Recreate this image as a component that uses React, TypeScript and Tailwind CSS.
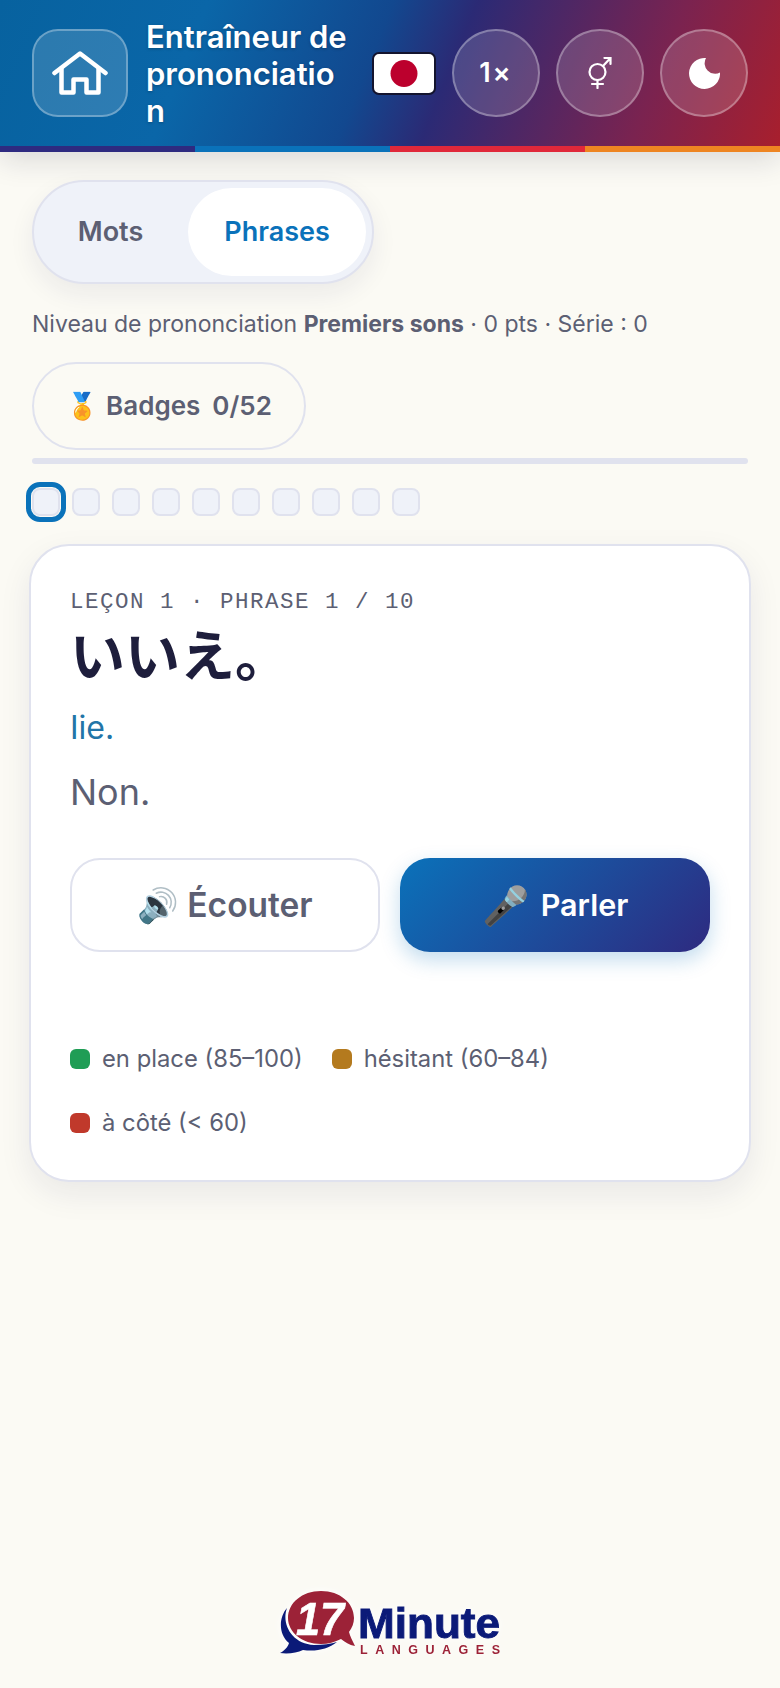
import React from 'react';

const Legend = ({ color, label }: { color: string; label: string }) => (
  <div className="flex items-center gap-[12px]">
    <span className={`h-5 w-5 rounded-[6px] ${color}`} />
    <span className="text-[23.800px] leading-[38px] text-[#5c5f73]">{label}</span>
  </div>
);

const HomeIcon = () => (
  <svg width="56" height="44" viewBox="0 0 56 44" fill="none" stroke="white" strokeWidth="4.5" strokeLinecap="round" strokeLinejoin="round">
    <path d="M2.500 22 28 2.500 53.500 22" />
    <path d="M9.500 18v23.500h12V28.500h13v13h12V18" />
  </svg>
);

const GenderIcon = () => (
  <svg width="24" height="32" viewBox="0 0 24 32" fill="none" stroke="white" strokeWidth="2.200" strokeLinecap="round">
    <circle cx="9.500" cy="15" r="8" />
    <path d="M9.500 23v8M4 27h11M15 9l7.500-8M16.500 1h6v6" />
  </svg>
);

const MoonIcon = () => (
  <svg width="32" height="32" viewBox="0 0 32 32">
    <path fill="white" d="M18 1A15.500 15.500 0 1 0 32 15.500A10.500 10.500 0 0 1 18 1z" />
  </svg>
);

const Logo = () => (
  <svg width="224" height="72" viewBox="0 0 224 72" className="[filter:drop-shadow(0_0_4px_white)]">
    <path fill="#0b1a78" d="M9 18C3 34 14 54 36 55c9 0 17-1 23-3-9 7-21 10-34 8-6 3-15 4-23 3 4-2 8-6 9-10C0 44 1 27 9 18z" />
    <path fill="#9c2237" d="M43 1c19 0 33 12 33 27 0 5-2 10-5 14 1 4 3 8 6 14-6-1-10-4-14-7-6 3-13 5-20 5-19 0-33-12-33-26C10 13 24 1 43 1z" />
    <text x="18" y="45" fill="white" stroke="white" strokeWidth="0.6" fontFamily="'Liberation Sans', sans-serif" fontSize="46" fontWeight="700" fontStyle="italic" textLength="48" lengthAdjust="spacingAndGlyphs">17</text>
    <text x="80" y="48" fill="#0b1a78" stroke="#0b1a78" strokeWidth="0.9" fontFamily="'Liberation Sans', sans-serif" fontSize="43" fontWeight="700" textLength="142" lengthAdjust="spacingAndGlyphs">Minute</text>
    <text x="82" y="64" fill="#9c2237" fontFamily="'Liberation Sans', sans-serif" fontSize="12.500" fontWeight="700" textLength="140">LANGUAGES</text>
  </svg>
);

const roundBtn =
  'flex h-[88px] w-[88px] shrink-0 items-center justify-center rounded-full border-2 border-white/30 bg-white/15 text-white';

export default function App() {
  const dots = [0, 1, 2, 3, 4, 5, 6, 7, 8, 9];

  return (
    <div className="flex min-h-[1688px] flex-col bg-[#fbfaf4] font-['Inter','Noto_Sans_CJK_JP',sans-serif]">
      <header className="shadow-[0_8px_28px_rgba(20,20,60,0.14)]">
        <div className="flex h-[146px] items-center gap-4 bg-[linear-gradient(112deg,#07629f_0%,#0a66a8_25%,#12488f_47%,#2b2a75_57%,#7a2350_82%,#a81f2d_100%)] pl-8 pr-8">
          <button className="flex h-[88px] w-[96px] shrink-0 items-center justify-center rounded-[26px] border-2 border-white/30 bg-white/15">
            <HomeIcon />
          </button>
          <h1 className="ml-[2px] mr-[6px] min-w-0 flex-1 text-[31px] leading-[37px] font-semibold break-words text-white [text-shadow:0_1px_3px_rgba(0,0,0,0.25)]">
            Entraîneur de prononciation
          </h1>
          <svg width="64" height="43" viewBox="0 0 64 43" className="shrink-0">
            <rect x="1" y="1" width="62" height="41" rx="6" fill="white" stroke="#14142e" strokeWidth="2" />
            <circle cx="32" cy="21.500" r="13.500" fill="#bc002d" />
          </svg>
          <button className={`${roundBtn} text-[27px] font-semibold tracking-[2px]`}>1×</button>
          <button className={roundBtn}>
            <GenderIcon />
          </button>
          <button className={roundBtn}>
            <MoonIcon />
          </button>
        </div>
        <div className="grid h-[6px] grid-cols-4">
          <div className="bg-[#2e2a80]" />
          <div className="bg-[#0a72ba]" />
          <div className="bg-[#e0283a]" />
          <div className="bg-[#ee8522]" />
        </div>
      </header>

      <main className="flex flex-1 flex-col px-8 pt-7">
        <div className="flex h-[104px] w-[342px] items-center gap-[3px] rounded-full border-2 border-[#e0e2ee] bg-[#eff2f9] p-[6px] shadow-[0_10px_26px_rgba(30,30,80,0.07)]">
          <div className="flex-1 pr-[4px] text-center text-[27px] font-semibold text-[#5c5f73]">Mots</div>
          <div className="flex h-[88px] w-[178px] items-center justify-center rounded-full bg-white text-[27px] font-semibold text-[#0a72ba]">
            Phrases
          </div>
        </div>

        <p className="mt-[24px] text-[23px] leading-[32px] text-[#5c5f73]">
          Niveau de prononciation <strong className="font-bold">Premiers sons</strong> · 0 pts · Série : 0
        </p>

        <div className="mt-[22px] flex h-[88px] w-[274px] items-center justify-center gap-2 rounded-full border-2 border-[#e0e2ee] pb-[2px] text-[26px] font-semibold text-[#5c5f73]">
          <span>🏅</span>
          <span>Badges</span>
          <span className="ml-1">0/52</span>
        </div>

        <div className="mt-2 h-[6px] rounded-full bg-[#e0e2ee]" />

        <div className="mt-6 flex gap-3">
          {dots.map(d => (
            <div
              key={d}
              className={`h-7 w-7 rounded-[8px] border-2 border-[#e0e2ee] bg-[#eff2f9] ${d === 0 ? 'outline-[5px] outline-offset-[1px] outline-[#0a72ba]' : ''}`}
            />
          ))}
        </div>

        <section className="-mx-[3px] mt-[28px] rounded-[40px] border-2 border-[#e0e2ee] bg-white px-[39px] pt-[42px] pb-[38px] shadow-[0_12px_32px_rgba(30,30,80,0.08)]">
          <div className="font-['Liberation_Mono',monospace] text-[22.500px] leading-[28px] tracking-[1.500px] text-[#5c5f73]">
            LEÇON 1 · PHRASE 1 / 10
          </div>
          <div className="mt-[4px] text-[55px] leading-[72px] font-bold text-[#1e1e3c]">いいえ。</div>
          <div className="mt-[14px] text-[32px] leading-[44px] text-[#2275a8]">Iie.</div>
          <div className="mt-[17px] text-[36px] leading-[50px] text-[#5c5f73]">Non.</div>
          <div className="mt-[41px] grid grid-cols-2 gap-5">
            <button className="flex h-[94px] items-center justify-center gap-2 rounded-[30px] border-2 border-[#e0e2ee] bg-white text-[33.500px] font-semibold text-[#5c5f73]">
              <span>🔊</span>
              <span>Écouter</span>
            </button>
            <button className="flex h-[94px] items-center justify-center gap-3 rounded-[30px] bg-[linear-gradient(135deg,#0a72ba,#2e2a80)] text-[30.500px] font-semibold text-white shadow-[0_8px_20px_rgba(10,114,186,0.25)]">
              <span className="text-[38px]">🎤</span>
              <span>Parler</span>
            </button>
          </div>
          <div className="mt-[88px] flex flex-wrap gap-x-[29px] gap-y-[26px]">
            <Legend color="bg-[#1f9d55]" label="en place (85–100)" />
            <Legend color="bg-[#b47a1e]" label="hésitant (60–84)" />
            <Legend color="bg-[#c0392b]" label="à côté (< 60)" />
          </div>
        </section>

        <div className="mt-auto flex justify-end pr-[246px] pb-[26px]">
          <Logo />
        </div>
      </main>
    </div>
  );
}
